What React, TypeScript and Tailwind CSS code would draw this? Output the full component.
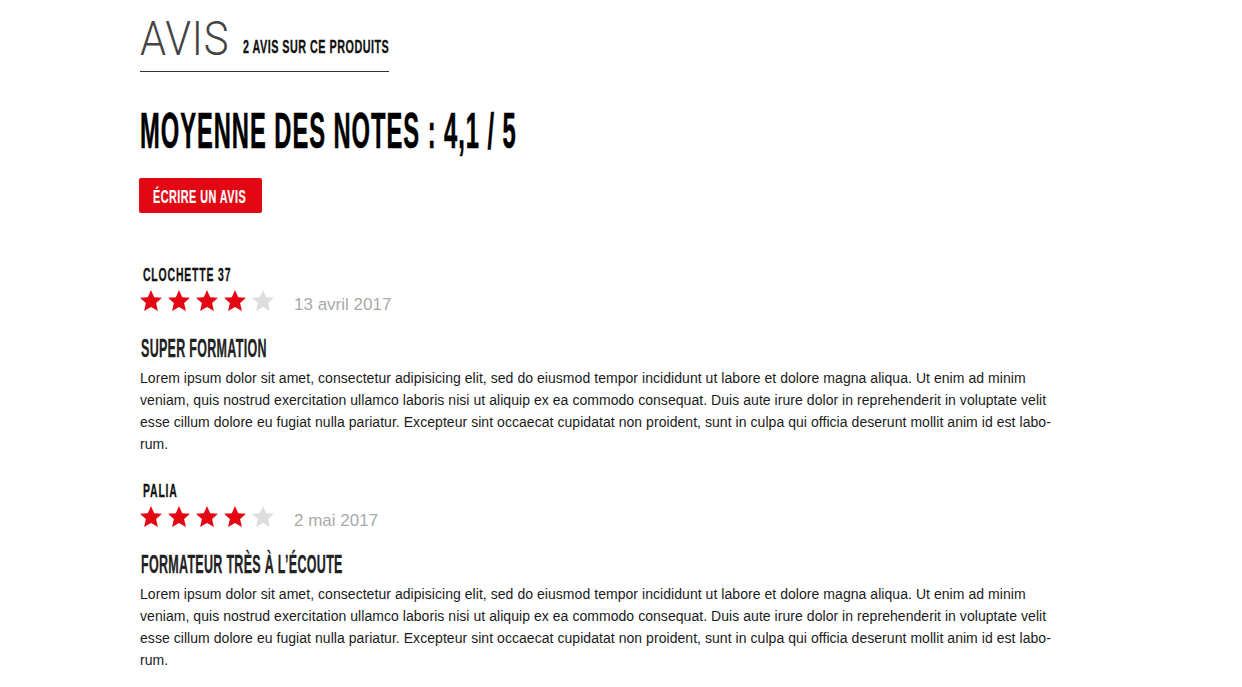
import React from "react";

const sans = "font-['Liberation_Sans',Arial,sans-serif]";

const Cond = ({ scale, className = "", children }: { scale: string; className?: string; children: React.ReactNode }) => (
  <span className={`inline-block origin-left whitespace-nowrap leading-none ${sans} font-bold ${scale} ${className}`}>
    {children}
  </span>
);

const Star = ({ on }: { on: boolean }) => (
  <svg width="24" height="24" viewBox="0 0 24 24" className={on ? "text-[#e30613]" : "text-[#dedede]"}>
    <polygon
      fill="currentColor"
      points="12,1 15.2,8.2 23,8.8 17.1,14 18.9,22 12,17.9 5.1,22 6.9,14 1,8.8 8.8,8.2"
    />
  </svg>
);

interface Review {
  author: string;
  date: string;
  title: string;
  rating: number;
}

const lines = [
  "Lorem ipsum dolor sit amet, consectetur adipisicing elit, sed do eiusmod tempor incididunt ut labore et dolore magna aliqua. Ut enim ad minim",
  "veniam, quis nostrud exercitation ullamco laboris nisi ut aliquip ex ea commodo consequat. Duis aute irure dolor in reprehenderit in voluptate velit",
  "esse cillum dolore eu fugiat nulla pariatur. Excepteur sint occaecat cupidatat non proident, sunt in culpa qui officia deserunt mollit anim id est labo-",
  "rum.",
];

const reviews: Review[] = [
  { author: "CLOCHETTE\u00a037", date: "13 avril 2017", title: "SUPER FORMATION", rating: 4 },
  { author: "PALIA", date: "2 mai 2017", title: "FORMATEUR TRÈS À L’ÉCOUTE", rating: 4 },
];

const ReviewItem = ({ r }: { r: Review }) => (
  <div className="pt-[50px]">
    <div className="h-[19px] pl-[3px]">
      <Cond scale="scale-x-[0.55]" className="text-[19px] text-[#111] tracking-[1.5px] [-webkit-text-stroke:0.3px_#111]">
        {r.author}
      </Cond>
    </div>
    <div className="mt-[7px] flex items-start h-[24px] -ml-px">
      <div className="flex gap-[4px]">
        {[0, 1, 2, 3, 4].map((i) => (
          <Star key={i} on={i < r.rating} />
        ))}
      </div>
      <span className={`ml-[19px] mt-[7px] text-[17px] leading-none text-[#aaaaaa] ${sans}`}>{r.date}</span>
    </div>
    <div className="mt-[23px] h-[25px] pl-px">
      <Cond scale="scale-x-[0.5]" className="text-[25px] text-[#222] tracking-[0.6px] [-webkit-text-stroke:0.3px_#222]">
        {r.title}
      </Cond>
    </div>
    <p className={`mt-[6px] text-[14px] leading-[22px] text-[#1a1a1a] tracking-[0.05px] whitespace-nowrap ${sans}`}>
      {lines.map((l, i) => (
        <React.Fragment key={i}>
          {l}
          {i < lines.length - 1 && <br />}
        </React.Fragment>
      ))}
    </p>
  </div>
);

export default function App() {
  return (
    <div className="w-[1242px] h-[687px] bg-white overflow-hidden">
      <div className="pl-[140px]">
        <div className="w-[249px] h-[72px] border-b border-[#333] flex items-start pt-[15px]">
          <span className="inline-block w-[103px]">
            <span className="inline-block origin-left scale-x-[0.87] text-[48px] leading-none font-light text-[#444] font-['Roboto',sans-serif] tracking-[1px]">
              AVIS
            </span>
          </span>
          <Cond scale="scale-x-[0.6]" className="mt-[23px] text-[18px] text-[#111] tracking-[0.8px] [-webkit-text-stroke:0.3px_#111]">
            2 AVIS SUR CE PRODUITS
          </Cond>
        </div>

        <div className="mt-[34px] h-[50px]">
          <Cond scale="scale-x-[0.475]" className="text-[50px] text-black tracking-[2px] [-webkit-text-stroke:0.6px_#000]">
            MOYENNE DES NOTES : 4,1 / 5
          </Cond>
        </div>

        <button className="mt-[22px] -ml-px w-[123px] h-[35px] rounded-[2px] bg-[#e30613] flex items-start pt-[10px] pl-[14px]">
          <Cond scale="scale-x-[0.6]" className="text-[18px] text-white tracking-[0.8px] [-webkit-text-stroke:0.2px_#fff]">
            ÉCRIRE UN AVIS
          </Cond>
        </button>

        <div className="-mt-[0.5px]">
          {reviews.map((r, i) => (
            <div key={i} className={i > 0 ? "-mt-[25.5px]" : ""}>
              <ReviewItem r={r} />
            </div>
          ))}
        </div>
      </div>
    </div>
  );
}
